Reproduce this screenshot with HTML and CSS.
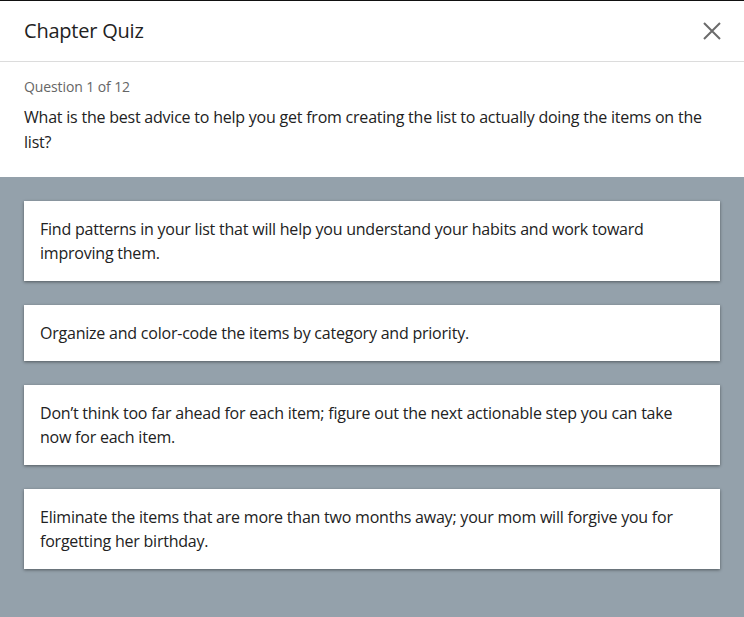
FILE: index.html
```html
<!DOCTYPE html>
<html lang="en">
<head>
<meta charset="utf-8">
<title>Chapter Quiz</title>
<link rel="stylesheet" href="styles.css">
</head>
<body>
<div class="modal">
  <header class="modal-header">
    <h1 class="modal-title">Chapter Quiz</h1>
    <button class="close-btn" aria-label="Close">
      <svg width="18" height="18" viewBox="0 0 18 18"><path d="M1 1L17 17M17 1L1 17" stroke="#6b6b6b" stroke-width="2" fill="none"/></svg>
    </button>
  </header>
  <section class="question">
    <div class="question-count">Question 1 of 12</div>
    <p class="question-text">What is the best advice to help you get from creating the list to actually doing the items on the list?</p>
  </section>
  <section class="answers">
    <div class="answer">Find patterns in your list that will help you understand your habits and work toward improving them.</div>
    <div class="answer">Organize and color-code the items by category and priority.</div>
    <div class="answer">Don’t think too far ahead for each item; figure out the next actionable step you can take now for each item.</div>
    <div class="answer">Eliminate the items that are more than two months away; your mom will forgive you for forgetting her birthday.</div>
  </section>
</div>
</body>
</html>
```
FILE: styles.css
```css
html, body {
  margin: 0;
  padding: 0;
  height: 100%;
}
body {
  font-family: "Open Sans", "Noto Sans", sans-serif;
  color: #222;
  background: #94a1ab;
  letter-spacing: -0.22px;
}
.modal {
  display: flex;
  flex-direction: column;
  min-height: 100%;
  border-top: 1px solid #111;
  box-sizing: border-box;
}
.modal-header {
  display: flex;
  align-items: center;
  justify-content: space-between;
  height: 59px;
  padding: 0 23px 1px 24px;
  background: #fff;
  border-bottom: 1px solid #dcdcdc;
}
.modal-title {
  margin: 0;
  font-size: 20px;
  font-weight: 400;
  color: #222;
}
.close-btn {
  border: 0;
  background: none;
  padding: 0;
  width: 18px;
  height: 18px;
  display: flex;
}
.question {
  background: #fff;
  padding: 15px 24px 22px;
}
.question-count {
  font-size: 14px;
  line-height: 20px;
  color: #666;
  letter-spacing: -0.1px;
}
.question-text {
  margin: 8px 0 0;
  font-size: 16px;
  line-height: 25px;
}
.answers {
  flex: 1;
  display: flex;
  flex-direction: column;
  gap: 24px;
  padding: 24px;
}
.answer {
  background: #fff;
  padding: 16px;
  font-size: 16px;
  line-height: 24px;
  box-shadow: 0 1px 3px rgba(0,0,0,0.45);
}
```
